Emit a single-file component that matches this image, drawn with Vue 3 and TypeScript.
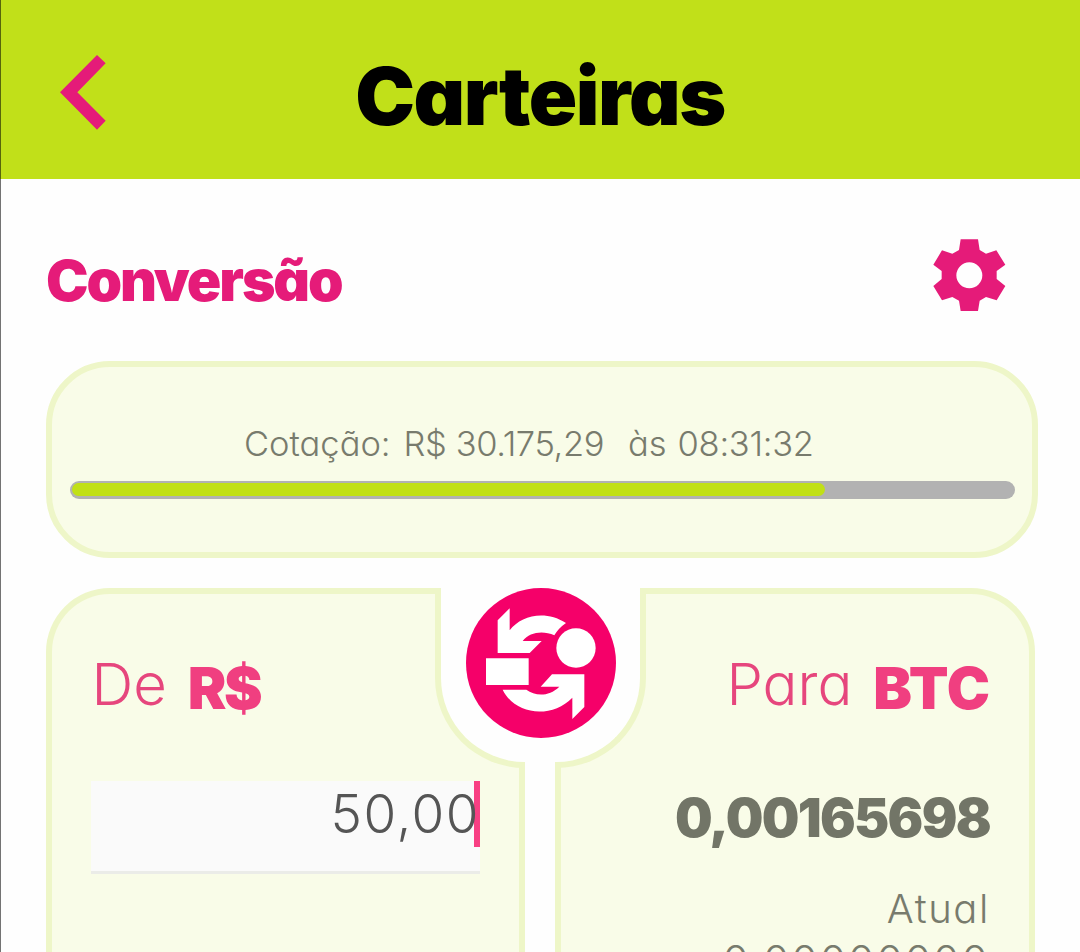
<script setup lang="ts">
import { ref } from 'vue'

const quote = ref('30.175,29')
const quoteTime = ref('08:31:32')
const amount = ref('50,00')
const converted = ref('0,00165698')
const current = ref('0,00000000')
const progress = ref(80.1)
</script>

<template>
  <div class="screen">
    <header class="topbar">
      <button class="back" aria-label="Voltar">
        <svg viewBox="180 165 138 225" width="46" height="75">
          <path d="M180 277 291 165 317 190 232 277 317 362 291 389Z" fill="#e51b79" />
        </svg>
      </button>
      <h1 class="title">Carteiras</h1>
    </header>

    <main class="content">
      <div class="heading">
        <h2 class="subtitle">Conversão</h2>
        <button class="settings" aria-label="Configurações">
          <svg viewBox="100 57 219 219" width="73" height="73">
            <path
              fill="#e51b79"
              fill-rule="evenodd"
              d="M183 58H235L240 90 259 101 290 91 317 134 291 153V177L317 198 291 241 259 231 240 242 235 273H183L178 242 158 231 127 241 101 198 126 177V153L101 134 127 91 158 101 178 90ZM170 166A39 39 0 1 0 248 166 39 39 0 1 0 170 166Z"
            />
          </svg>
        </button>
      </div>

      <section class="quote">
        <p class="quote-text">
          <span>Cotação:</span><span class="price">R$ {{ quote }}</span><span class="at">às</span><span class="time">{{ quoteTime }}</span>
        </p>
        <div class="track"><div class="fill" :style="{ width: progress + '%' }"></div></div>
      </section>

      <section class="exchange">
        <article class="card from">
          <p class="label"><span class="thin">De</span><b>R$</b></p>
          <div class="field"><i class="caret"></i><span class="amount">{{ amount }}</span></div>
        </article>
        <article class="card to">
          <p class="label"><span class="thin">Para</span><b>BTC</b></p>
          <p class="converted">{{ converted }}</p>
          <p class="current">Atual</p>
          <p class="current value">{{ current }}</p>
        </article>
        <div class="notch">
          <svg class="swap" viewBox="107 55 450 450" width="150" height="150">
            <circle cx="332" cy="280" r="225" fill="#f50069" />
            <g fill="#fff">
              <path d="M202 152 238 116V182C272 137 345 120 407 160Q385 175 372 197C338 182 298 187 277 214H334L298 250H202Z" />
              <circle cx="437" cy="235" r="59" />
              <path d="M167 266H295V346H167Z" />
              <path d="M217 360H288C315 380 355 382 387 351H331L365 314H462V412L426 448V384C365 447 255 438 217 360Z" />
            </g>
          </svg>
        </div>
      </section>
    </main>
  </div>
</template>

<style>
body {
  margin: 0;
  background: #fff;
}
</style>

<style scoped>
.screen {
  position: relative;
  width: 1080px;
  height: 952px;
  overflow: hidden;
  background: #fefefe;
  font-family: Inter, "Liberation Sans", sans-serif;
  font-feature-settings: "cv11" 1;
}
.screen::after {
  content: "";
  position: absolute;
  inset: 0 auto 0 0;
  width: 1px;
  background: rgba(0, 0, 0, 0.55);
}
h1,
h2,
p {
  margin: 0;
}
button {
  padding: 0;
  border: 0;
  background: none;
}
svg {
  display: block;
}
.topbar {
  box-sizing: border-box;
  display: grid;
  grid-template-columns: 106px 1fr 106px;
  height: 179.4px;
  background: #c1e019;
}
.back {
  justify-self: end;
  align-self: start;
  margin-top: 55px;
}
.title {
  padding-top: 46px;
  text-align: center;
  font-size: 80px;
  line-height: 100px;
  font-weight: 900;
  letter-spacing: -1.4px;
  color: #000;
}
.content {
  display: flex;
  flex-direction: column;
  padding: 0 42px 0 46px;
}
.heading {
  display: flex;
  justify-content: space-between;
  height: 182px;
  padding-right: 32px;
}
.subtitle {
  padding-top: 67px;
  font-size: 57px;
  line-height: 70px;
  font-weight: 900;
  letter-spacing: -2.1px;
  color: #e51b79;
}
.settings {
  align-self: flex-start;
  margin-top: 60px;
}
.quote {
  box-sizing: border-box;
  height: 197px;
  padding: 52px 17.5px 0;
  border: 6px solid #eef6c8;
  border-radius: 64px;
  background: #f9fce8;
}
.quote-text {
  display: flex;
  padding-left: 174.5px;
  font-size: 34.5px;
  line-height: 50px;
  font-weight: 300;
  white-space: nowrap;
  color: #787b6d;
}
.price {
  margin-left: 13px;
  letter-spacing: -0.4px;
}
.at {
  margin-left: 24px;
}
.time {
  margin-left: 11px;
  letter-spacing: -0.3px;
}
.track {
  box-sizing: border-box;
  height: 18px;
  margin-top: 11.3px;
  padding: 2.5px 2px;
  border-radius: 9px;
  background: #b2b2b2;
}
.fill {
  height: 13px;
  border-radius: 6.5px;
  background: #c1e016;
}
.exchange {
  position: relative;
  display: grid;
  grid-template-columns: 479px 480px;
  column-gap: 30px;
  height: 394px;
  margin-top: 30px;
}
.card {
  box-sizing: border-box;
  border: 6px solid #eef6c8;
  border-bottom: 0;
  background: #f9fce8;
}
.from {
  padding: 58px 39px 0 38.5px;
  border-top-left-radius: 64px;
}
.to {
  padding: 58px 39px 0 0;
  border-top-right-radius: 64px;
  text-align: right;
}
.label {
  display: flex;
  gap: 21px;
  font-size: 58px;
  line-height: 64px;
  color: #f03f80;
  white-space: nowrap;
}
.from .label {
  padding-left: 1px;
}
.to .label {
  justify-content: flex-end;
}
.label b {
  padding-top: 4px;
  font-weight: 900;
}
.from b {
  letter-spacing: -2.5px;
}
.thin {
  font-weight: 300;
  color: #e6467d;
}
.field {
  position: relative;
  box-sizing: border-box;
  height: 93px;
  margin-top: 61px;
  border-bottom: 3px solid #ebece8;
  background: #fafafa;
  text-align: right;
}
.amount {
  position: relative;
  font-size: 53px;
  line-height: 67px;
  font-weight: 300;
  letter-spacing: 1.5px;
  color: #555;
}
.caret {
  position: absolute;
  top: 0;
  right: 0;
  width: 6px;
  height: 66px;
  background: #f83f83;
}
.converted {
  margin-top: 68px;
  font-size: 53px;
  line-height: 60px;
  font-weight: 900;
  letter-spacing: -1.7px;
  color: #727567;
}
.current {
  margin-top: 36px;
  font-size: 40px;
  line-height: 50px;
  font-weight: 300;
  letter-spacing: 1.6px;
  color: #787b6d;
}
.current.value {
  margin-top: 2px;
  font-size: 42px;
  letter-spacing: 2.4px;
}
.notch {
  position: absolute;
  top: 0;
  left: 389px;
  box-sizing: border-box;
  width: 211px;
  height: 180px;
  padding-left: 24.7px;
  border: solid #eef6c8;
  border-width: 0 6px 6px;
  border-radius: 0 0 90px 90px;
  background: #fefefe;
}
.notch::after {
  content: "";
  position: absolute;
  bottom: -6px;
  left: 84px;
  width: 30px;
  height: 6px;
  background: #fefefe;
}
</style>
